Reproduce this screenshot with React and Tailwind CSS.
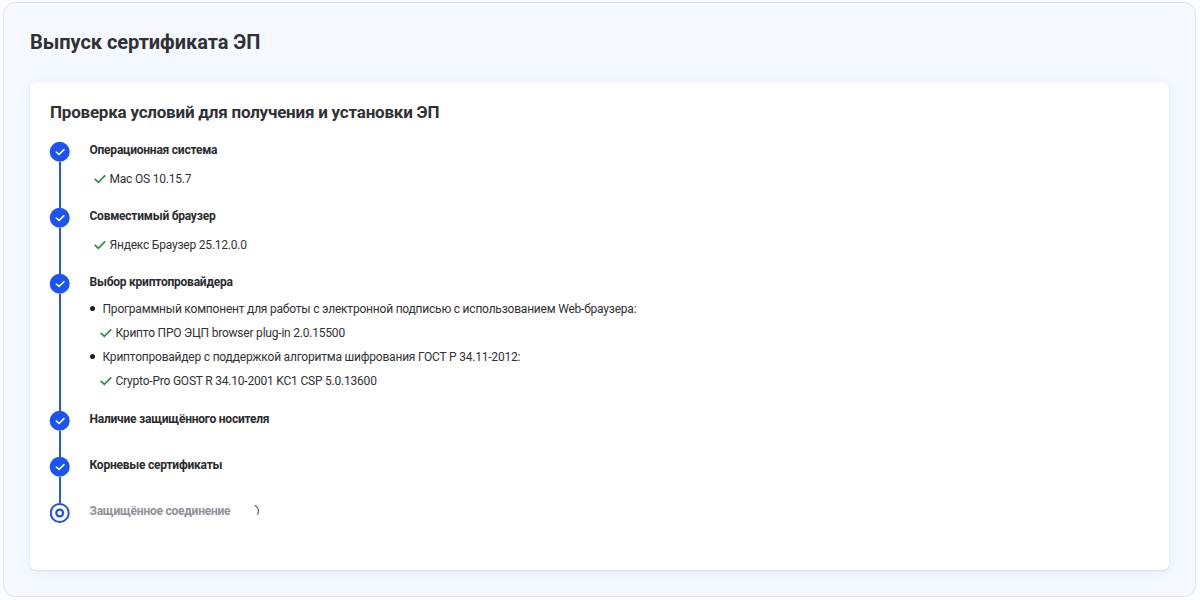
import clsx from "clsx";

const steps = [
    {
        title: "Операционная система",
        height: "h-[66.4px]",
        result: "Mac OS 10.15.7"
    },
    {
        title: "Совместимый браузер",
        height: "h-[66.4px]",
        result: "Яндекс Браузер 25.12.0.0"
    },
    {
        title: "Выбор криптопровайдера",
        height: "h-[136.2px]",
        items: [
            {
                label: "Программный компонент для работы с электронной подписью с использованием Web-браузера:",
                result: "Крипто ПРО ЭЦП browser plug-in 2.0.15500"
            },
            {
                label: "Криптопровайдер с поддержкой алгоритма шифрования ГОСТ Р 34.11-2012:",
                result: "Crypto-Pro GOST R 34.10-2001 KC1 CSP 5.0.13600"
            }
        ]
    },
    { title: "Наличие защищённого носителя", height: "h-[46.4px]" },
    { title: "Корневые сертификаты", height: "h-[46.4px]" },
    { title: "Защищённое соединение", height: "h-[20px]", pending: true }
];

function GreenCheck() {
    return (
        <svg viewBox="0 0 12 10" className="w-3 h-2.5 shrink-0 mt-px" fill="none" stroke="#2b8c45" strokeWidth="1.7">
            <path d="M0.7 4.9 4.3 8.4 11.2 1.4" />
        </svg>
    )
}

function StepMark({ pending }) {
    if (pending)
        return (
            <svg viewBox="0 0 20 20" className="size-5 shrink-0" fill="none" stroke="#1f50e0">
                <circle cx="9.7" cy="10" r="9" strokeWidth="2" />
                <circle cx="9.7" cy="10" r="3.4" strokeWidth="2.2" />
            </svg>
        )

    return (
        <svg viewBox="0 0 20 20" className="size-5 shrink-0 overflow-visible" fill="none">
            <circle cx="9.7" cy="9.8" r="10" fill="#1c54f4" />
            <path d="M6.3 10 9 12.5 14 7.7" stroke="#fff" strokeWidth="1.6" strokeLinecap="round" strokeLinejoin="round" />
        </svg>
    )
}

function Step({ step }) {
    return (
        <li className={clsx("flex gap-x-[19.5px]", step.height)}>
            <div className="flex flex-col items-center">
                <StepMark pending={step.pending} />
                {!step.pending && <div className="w-[2px] grow bg-[#2a56d8]" />}
            </div>

            <div>
                <div className="flex items-center">
                    <h3 className={clsx("leading-4 font-bold tracking-[-0.23px]", step.pending ? "text-[#8e9097]" : "text-[#2a2b2e]")}>
                        {step.title}
                    </h3>
                    {step.pending && (
                        <svg viewBox="0 0 8 12" className="w-2 h-3 ml-[22px] -mt-[3px]" fill="none" stroke="#55585e" strokeWidth="1.1">
                            <path d="M2.5 1.2C6.4 3 7.4 7 5.5 10.7" />
                        </svg>
                    )}
                </div>

                {step.result && (
                    <p className="flex items-center gap-x-1 mt-[13px] ml-1 leading-4">
                        <GreenCheck />
                        {step.result}
                    </p>
                )}

                {step.items && (
                    <ul className="mt-[6.6px]">
                        {step.items.map((item) => (
                            <li key={item.label} className="leading-6">
                                <p className="flex items-center gap-x-2">
                                    <span className="size-[5px] rounded-full bg-[#1c1d1f]" />
                                    {item.label}
                                </p>
                                <p className="flex items-center gap-x-1 ml-2.5">
                                    <GreenCheck />
                                    {item.result}
                                </p>
                            </li>
                        ))}
                    </ul>
                )}
            </div>
        </li>
    )
}

function App() {
    return (
        <main className="h-screen pt-0.5 pb-[3px] pl-[3px] pr-1 bg-[#fafcff] font-[Roboto,sans-serif] text-[#303134]">
            <section className="h-full flex flex-col px-[26px] pt-[25px] pb-[26px] border border-[#dbe4f2] rounded-xl bg-[#f5f8ff]">
                <h1 className="text-[20px] leading-7 font-bold tracking-[-0.05px]">Выпуск сертификата ЭП</h1>

                <div className="grow mt-[26px] px-5 pt-[18px] bg-white rounded-md shadow-[0_1px_2px_#d5dbea,0_2px_12px_#e9eefa]">
                    <h2 className="text-[17px] leading-6 font-bold tracking-[-0.22px]">Проверка условий для получения и установки ЭП</h2>

                    <ul className="mt-[17.6px] text-[12px] tracking-[-0.21px]">
                        {steps.map((step) => <Step key={step.title} step={step} />)}
                    </ul>
                </div>
            </section>
        </main>
    )
}

export default App;
